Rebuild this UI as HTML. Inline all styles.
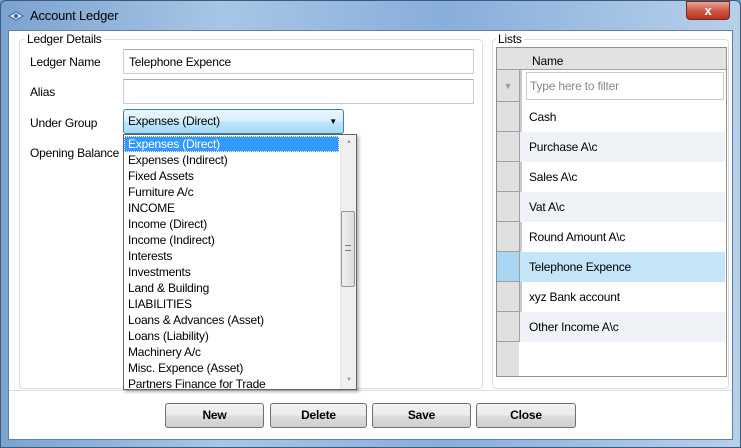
<!DOCTYPE html>
<html><head><style>
*{box-sizing:border-box;margin:0;padding:0}
body{width:741px;height:448px;overflow:hidden;font-family:"Liberation Sans",sans-serif;font-size:12px;letter-spacing:-0.2px;color:#000;position:relative;background:#6d9cc9}
.a{position:absolute}
.frame{left:0;top:0;width:741px;height:448px;background:linear-gradient(90deg,#7ba3cf,#a8c6e6 30%,#88aedb 60%,#b7d0ea);border:1px solid #3a5a80;border-radius:6px 6px 0 0}
.client{left:8px;top:30px;width:725px;height:410px;background:#fff;border:1px solid #5d7fa8}
.grp{border:1px solid #d5dfe5;border-radius:4px}
.lbl{background:#fff;padding:0 2px}
.tb{border:1px solid #c5cdd6;border-top-color:#abadb3;background:#fff;padding-left:5px;line-height:24px}
.btn{top:403px;height:25px;border:1px solid #707070;border-radius:3px;background:linear-gradient(#f2f2f2,#ebebeb 50%,#dddddd 51%,#cfcfcf);font-weight:bold;text-align:center;line-height:23px;font-size:12px}
.it{height:16px;line-height:16px;padding-left:4px;white-space:nowrap}
.row{left:520px;width:205px;height:30px;line-height:31px;padding-left:9px}
.rh{left:497px;width:22px;height:30px;background:#e0e0e0;border-bottom:1px solid #a0a0a0}
</style></head><body>
<div class="a frame"></div>
<div class="a" style="left:8px;top:10px;width:16px;height:10px"><svg width="16" height="10"><path d="M1 5 L8 1 L15 5 L8 9Z" fill="#dde8f2" stroke="#3d6590"/><circle cx="8" cy="5" r="2" fill="#3d6590"/></svg></div>
<div class="a" style="left:30px;top:8px;font-size:13px">Account Ledger</div>
<div class="a" style="left:686px;top:1px;width:44px;height:19px;border:1px solid #6b2a22;border-radius:0 0 4px 4px;background:linear-gradient(#e6a497,#cf5a45 50%,#b9331e);color:#fff;font-weight:bold;text-align:center;line-height:17px;font-size:13px">x</div>
<div class="a client"></div>
<div class="a" style="left:9px;top:390px;width:723px;height:49px;background:#fff;border-top:1px solid #d5dfe5"></div>
<div class="a grp" style="left:19px;top:39px;width:464px;height:350px"></div>
<div class="a lbl" style="left:25px;top:32px">Ledger Details</div>
<div class="a" style="left:30px;top:55px">Ledger Name</div>
<div class="a tb" style="left:123px;top:49px;width:351px;height:25px">Telephone Expence</div>
<div class="a" style="left:30px;top:85px">Alias</div>
<div class="a tb" style="left:123px;top:79px;width:351px;height:25px"></div>
<div class="a" style="left:30px;top:116px">Under Group</div>
<div class="a" style="left:123px;top:109px;width:221px;height:25px;border:1px solid #3c7fb1;border-radius:3px;background:linear-gradient(#eaf6fd,#d9f0fc 50%,#bee6fd 51%,#a7d9f5);padding-left:4px;line-height:23px">Expenses (Direct)<span class="a" style="right:6px;top:0;font-size:8px">▼</span></div>
<div class="a" style="left:30px;top:146px">Opening Balance</div>
<div class="a" style="left:123px;top:134px;width:234px;height:256px;border:1px solid #646464;background:#fff;box-shadow:2px 2px 3px rgba(0,0,0,.3);overflow:hidden;padding-top:1px">
<div class="it" style="background:#3399ff;color:#fff;width:215px;outline:1px dotted #fff;outline-offset:-1px">Expenses (Direct)</div>
<div class="it">Expenses (Indirect)</div><div class="it">Fixed Assets</div><div class="it">Furniture A/c</div><div class="it">INCOME</div><div class="it">Income (Direct)</div><div class="it">Income (Indirect)</div><div class="it">Interests</div><div class="it">Investments</div><div class="it">Land &amp; Building</div><div class="it">LIABILITIES</div><div class="it">Loans &amp; Advances (Asset)</div><div class="it">Loans (Liability)</div><div class="it">Machinery A/c</div><div class="it">Misc. Expence (Asset)</div><div class="it">Partners Finance for Trade</div>
<div class="a" style="left:216px;top:0;width:16px;height:254px;background:#f0f0f0;border-left:1px solid #e5e5e5"></div>
<div class="a" style="left:222px;top:4px;font-size:6px;color:#999">▲</div>
<div class="a" style="left:222px;top:242px;font-size:6px;color:#999">▼</div>
<div class="a" style="left:217px;top:76px;width:14px;height:76px;border:1px solid #969696;border-radius:2px;background:linear-gradient(90deg,#f0f0f0,#dcdcdc)"></div>
<div class="a" style="left:221px;top:110px;width:6px;height:6px;border-top:1px solid #777;border-bottom:1px solid #777"></div>
</div>
<div class="a grp" style="left:492px;top:39px;width:237px;height:350px"></div>
<div class="a lbl" style="left:496px;top:32px">Lists</div>
<div class="a" style="left:496px;top:47px;width:231px;height:330px;border:1px solid #8e8f8f;background:#fff"></div>
<div class="a" style="left:497px;top:48px;width:22px;height:328px;background:#e0e0e0"></div>
<div class="a" style="left:519px;top:48px;width:3px;height:294px;background:#c8c8c8;border-left:1px solid #a0a0a0"></div>
<div class="a" style="left:497px;top:48px;width:229px;height:22px;background:#e2e2e2;border-bottom:1px solid #a0a0a0"></div>
<div class="a" style="left:532px;top:54px">Name</div>
<div class="a" style="left:497px;top:70px;width:22px;height:32px;border-bottom:1px solid #a0a0a0;color:#999;font-size:9px;text-align:center;line-height:32px">▼</div>
<div class="a" style="left:526px;top:72px;width:198px;height:28px;border:1px solid #ccc;color:#888;padding-left:3px;line-height:26px">Type here to filter</div>
<div class="a rh" style="top:102px"></div><div class="a row" style="top:102px">Cash</div>
<div class="a rh" style="top:132px"></div><div class="a row" style="top:132px;background:#eff3f7">Purchase A\c</div>
<div class="a rh" style="top:162px"></div><div class="a row" style="top:162px">Sales A\c</div>
<div class="a rh" style="top:192px"></div><div class="a row" style="top:192px;background:#eff3f7">Vat A\c</div>
<div class="a rh" style="top:222px"></div><div class="a row" style="top:222px">Round Amount A\c</div>
<div class="a rh" style="top:252px;background:#a9d6f2"></div><div class="a row" style="top:252px;background:#c4e4f7">Telephone Expence</div>
<div class="a rh" style="top:282px"></div><div class="a row" style="top:282px">xyz Bank account</div>
<div class="a rh" style="top:312px"></div><div class="a row" style="top:312px;background:#eff3f7">Other Income A\c</div>
<div class="a btn" style="left:165px;width:99px">New</div>
<div class="a btn" style="left:270px;width:97px">Delete</div>
<div class="a btn" style="left:372px;width:99px">Save</div>
<div class="a btn" style="left:476px;width:100px">Close</div>
</body></html>
